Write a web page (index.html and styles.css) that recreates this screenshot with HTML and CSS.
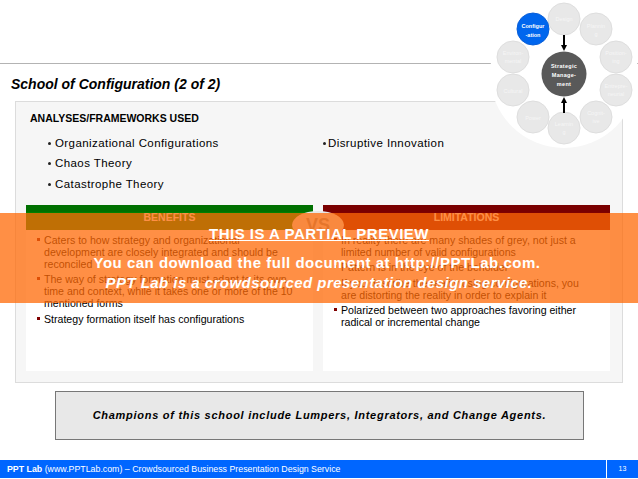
FILE: index.html
```html
<!DOCTYPE html>
<html lang="en">
<head>
<meta charset="utf-8">
<title>School of Configuration</title>
<link rel="stylesheet" href="styles.css">
</head>
<body>
<div class="slide">
  <header class="head">
    <div class="rule"></div>
    <h1 class="title">School of Configuration (2 of 2)</h1>
  </header>
  <main class="panel">
    <h2 class="panel-title">ANALYSES/FRAMEWORKS USED</h2>
    <div class="frameworks">
      <ul class="dots">
        <li>Organizational Configurations</li>
        <li>Chaos Theory</li>
        <li>Catastrophe Theory</li>
      </ul>
      <ul class="dots">
        <li>Disruptive Innovation</li>
      </ul>
    </div>
    <div class="compare">
      <section class="card">
        <h3 class="card-head green">BENEFITS</h3>
        <ul class="points">
          <li>Caters to how strategy and organizational development are closely integrated and should be reconciled</li>
          <li>The way of strategy formation must adapt to its own time and context, while it takes one or more of the 10 mentioned forms</li>
          <li>Strategy formation itself has configurations</li>
        </ul>
      </section>
      <section class="card">
        <h3 class="card-head red">LIMITATIONS</h3>
        <ul class="points">
          <li>In reality there are many shades of grey, not just a limited number of valid configurations</li>
          <li>Pattern is in the eye of the beholder</li>
          <li>If you describe the reality using configurations, you are distorting the reality in order to explain it</li>
          <li>Polarized between two approaches favoring either radical or incremental change</li>
        </ul>
      </section>
      <div class="vs">VS</div>
    </div>
  </main>
  <div class="champions">Champions of this school include Lumpers, Integrators, and Change Agents.</div>
  <footer class="foot">
    <div class="foot-text"><b>PPT Lab</b> (www.PPTLab.com) – Crowdsourced Business Presentation Design Service</div>
    <div class="foot-num">13</div>
  </footer>

  <svg class="wheel" viewBox="0 0 148 148" width="148" height="148" aria-label="Schools of strategic management">
    <circle class="disc" cx="74" cy="74" r="74"/>
    <g class="node"><circle cx="74" cy="19" r="16"/><text x="74" y="21">Design</text></g>
    <g class="node"><circle cx="106" cy="29" r="16"/><text x="106" y="28">Plannin</text><text x="106" y="36">g</text></g>
    <g class="node"><circle cx="126" cy="57" r="16"/><text x="126" y="55">Position-</text><text x="126" y="63">ing</text></g>
    <g class="node"><circle cx="126" cy="90" r="16"/><text x="126" y="88">Entrepre-</text><text x="126" y="96">neurial</text></g>
    <g class="node"><circle cx="106" cy="117" r="16"/><text x="106" y="115">Cognit-</text><text x="106" y="123">ive</text></g>
    <g class="node"><circle cx="74" cy="128" r="16"/><text x="74" y="126">Learnin</text><text x="74" y="134">g</text></g>
    <g class="node"><circle cx="43" cy="117" r="16"/><text x="43" y="120">Power</text></g>
    <g class="node"><circle cx="23" cy="90" r="16"/><text x="23" y="93">Cultural</text></g>
    <g class="node"><circle cx="23" cy="57" r="16"/><text x="23" y="55">Environ-</text><text x="23" y="63">mental</text></g>
    <g class="node active"><circle cx="43" cy="29" r="16"/><text x="43" y="28">Configur</text><text x="43" y="37">-ation</text></g>
    <path class="arrow" d="M74 35V46"/><path class="tip" d="M71 45H77L74 51Z"/>
    <path class="arrow" d="M74 113V102"/><path class="tip" d="M71 103H77L74 97Z"/>
    <g class="hub"><circle cx="74" cy="74" r="22.500"/><text x="74" y="68">Strategic</text><text x="74" y="77">Manage-</text><text x="74" y="86">ment</text></g>
  </svg>

  <aside class="banner">
    <p class="b1">THIS IS A PARTIAL PREVIEW</p>
    <p class="b2">You can download the full document at http://PPTLab.com.</p>
    <p class="b3">PPT Lab is a crowdsourced presentation design service.</p>
  </aside>
</div>
</body>
</html>
```

FILE: styles.css
```css
* { box-sizing: border-box; }
html, body { margin: 0; padding: 0; background: #fff; }
body { font-family: "Liberation Sans", Arial, sans-serif; color: #000; }
ul, h1, h2, h3, p { margin: 0; padding: 0; }
ul { list-style: none; }

.slide {
  position: relative;
  width: 638px;
  height: 479px;
  overflow: hidden;
  display: flex;
  flex-direction: column;
}

.head {
  height: 101px;
  padding-top: 63px;
  flex: none;
}
.rule {
  height: 1px;
  background: #b3b3b3;
}
.title {
  font-size: 14px;
  line-height: 16px;
  font-weight: bold;
  font-style: italic;
  margin: 12px 0 0 11px;
}

.panel {
  margin-left: 15px;
  width: 608px;
  height: 282px;
  background: #f6f6f6;
  border: 1px solid #dcdcdc;
  padding: 10px 10px 0;
  flex: none;
}
.panel-title {
  font-size: 10.500px;
  line-height: 12px;
  font-weight: bold;
  margin-left: 4px;
}
.frameworks {
  display: flex;
  margin-top: 9px;
  padding-left: 21px;
}
.frameworks .dots { width: 276px; }
.frameworks .dots + .dots li { padding-left: 5px; }
.frameworks .dots + .dots li::before { left: 0; }
.dots li {
  font-size: 11.500px;
  line-height: 20.300px;
  letter-spacing: .42px;
  padding-left: 8px;
  position: relative;
}
.dots li::before {
  content: "";
  position: absolute;
  left: 1px;
  top: 9px;
  width: 3px;
  height: 3px;
  border-radius: 50%;
  background: #222;
}

.compare {
  position: relative;
  display: grid;
  grid-template-columns: 287px 287px;
  column-gap: 10px;
  margin-top: 11px;
}
.card { background: #fff; height: 166px; }
.card-head {
  height: 25px;
  border-top: 7px solid;
  font-size: 10.500px;
  line-height: 11px;
  font-weight: bold;
  color: #fff;
  text-align: center;
}
.green { background: #008000; border-color: #007000; }
.red { background: #800000; border-color: #7a0000; }
.points {
  padding: 4px 16px 0 18px;
}
.points li {
  position: relative;
  font-size: 10.600px;
  line-height: 12px;
  margin-bottom: 3.500px;
}
.points li::before {
  content: "";
  position: absolute;
  left: -7px;
  top: 4px;
  width: 3px;
  height: 3px;
  background: #800000;
}
.vs {
  position: absolute;
  left: 266px;
  top: 6px;
  width: 52px;
  height: 28px;
  border-radius: 50%;
  background: #e6e6e6;
  color: #999;
  font-size: 18px;
  font-weight: bold;
  line-height: 28px;
  text-align: center;
}

.champions {
  margin: 8px 0 0 55px;
  width: 529px;
  height: 49px;
  background: #e8e8e8;
  border: 1px solid #777;
  font-size: 11px;
  font-weight: bold;
  font-style: italic;
  letter-spacing: .72px;
  line-height: 47px;
  text-align: center;
  flex: none;
}

.foot {
  margin-top: 20px;
  height: 18px;
  background: #0066ff;
  color: #fff;
  display: flex;
  font-size: 8.800px;
  line-height: 18px;
  flex: none;
}
.foot-text { flex: 1; padding-left: 7px; }
.foot-num {
  width: 32px;
  border-left: 1px solid #fff;
  text-align: center;
  font-size: 7px;
}

.wheel {
  position: absolute;
  left: 490px;
  top: 0;
}
.disc { fill: #fff; }
.node circle { fill: #e8e8e8; stroke: #dedede; stroke-width: 1; }
.node text, .hub text {
  font-family: "Liberation Sans", Arial, sans-serif;
  text-anchor: middle;
  font-size: 5.500px;
  fill: #f6f6f6;
}
.node.active circle { fill: #0066ee; stroke: #0a5fd8; }
.node.active text { fill: #fff; font-weight: bold; }
.hub circle { fill: #595959; }
.hub text { fill: #fff; font-weight: bold; letter-spacing: .3px; }
.arrow { stroke: #000; stroke-width: 2; fill: none; }
.tip { fill: #000; }

.banner {
  position: absolute;
  left: 0;
  top: 213px;
  width: 638px;
  height: 90px;
  background: rgba(255, 106, 7, .75);
  color: #fff;
  text-align: center;
  font-weight: bold;
}
.b1 {
  font-size: 15px;
  line-height: 20px;
  margin-top: 11px;
  text-decoration: underline;
  letter-spacing: .5px;
}
.b2 {
  font-size: 15px;
  line-height: 20px;
  margin-top: 9px;
  padding-right: 4px;
  letter-spacing: .5px;
}
.b3 {
  font-size: 15px;
  line-height: 20px;
  font-style: italic;
  letter-spacing: .45px;
}
```
